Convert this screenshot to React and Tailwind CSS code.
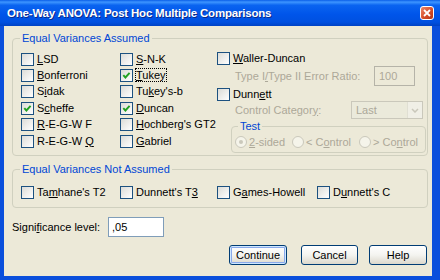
import React from 'react';

const Check = ({ checked }) => (
  <span className="w-[13px] h-[13px] shrink-0 border border-[#1c5180] bg-linear-to-br from-[#dcdcd7] to-white flex items-center justify-center">
    {checked && (
      <svg width="9" height="9" viewBox="0 0 9 9">
        <polyline points="1.3,4.2 3.4,6.5 7.6,1.8" fill="none" stroke="#21a121" strokeWidth="1.9" />
      </svg>
    )}
  </span>
);

const Row = ({ checked, children, h = 'h-[16.4px]' }) => (
  <div className={`${h} flex items-center gap-[3px] whitespace-nowrap`}>
    <Check checked={checked} />
    <span>{children}</span>
  </div>
);

const Radio = ({ checked }) => (
  <span className="w-[12px] h-[12px] shrink-0 rounded-full border border-[#cac8bb] bg-[#f5f4ea] flex items-center justify-center">
    {checked && <span className="w-[4px] h-[4px] rounded-full bg-[#cac8bb]" />}
  </span>
);

const Btn = ({ children, def }) => (
  <button
    className={`h-[20px] rounded-[3px] border border-[#003c74] bg-linear-to-b from-white via-[#f4f4f0] to-[#dcd8cc] text-black ${
      def ? 'shadow-[inset_0_0_0_1px_#cee7ff,inset_0_0_0_2px_#8aa9ea]' : ''
    }`}
  >
    {children}
  </button>
);

export default function App() {
  return (
    <div className="w-[440px] h-[280px] flex flex-col bg-[#0a4fdc] font-['Liberation_Sans',Arial,sans-serif] text-[11px] leading-[13px] text-black overflow-hidden">
      {/* Title bar */}
      <div className="h-[26px] shrink-0 flex items-center pl-[7px] pr-[6px] bg-[linear-gradient(180deg,#0a5fe8_0%,#3d95ff_8%,#0a64f0_20%,#0055ea_55%,#0050e0_85%,#0042c4_100%)]">
        <span className="text-white font-bold text-[11.5px] tracking-[-0.2px] [text-shadow:1px_1px_0_#0b2a8a]">
          One-Way ANOVA: Post Hoc Multiple Comparisons
        </span>
        <div className="ml-auto w-[14px] h-[14px] rounded-[3px] border border-white bg-linear-to-br from-[#e9866a] via-[#d9512c] to-[#b33316] flex items-center justify-center">
          <svg width="8" height="8" viewBox="0 0 8 8">
            <path d="M1 1 L7 7 M7 1 L1 7" stroke="white" strokeWidth="1.8" />
          </svg>
        </div>
      </div>

      {/* Body */}
      <div className="flex-1 ml-[4px] mr-[8px] mb-[4px] bg-[#ece9d8] pl-[8px] pr-[4px] pt-[5px] flex flex-col">
        {/* Equal Variances Assumed */}
        <fieldset className="border border-[#d0d0bf] rounded-[4px] px-0 pb-[2px]">
          <legend className="ml-[7px] px-[2px] leading-[14px] text-[#0046d5]">Equal Variances Assumed</legend>
          <div className="grid grid-cols-[99px_97px_1fr] pl-[8px] pt-[6px] items-start">
            <div className="flex flex-col">
              <Row><u>L</u>SD</Row>
              <Row><u>B</u>onferroni</Row>
              <Row>S<u>i</u>dak</Row>
              <Row checked>S<u>c</u>heffe</Row>
              <Row><u>R</u>-E-G-W F</Row>
              <Row>R-E-G-W <u>Q</u></Row>
            </div>
            <div className="flex flex-col">
              <Row><u>S</u>-N-K</Row>
              <Row checked>
                <span className="outline outline-1 outline-dotted outline-black"><u>T</u>ukey</span>
              </Row>
              <Row>Tu<u>k</u>ey's-b</Row>
              <Row checked><u>D</u>uncan</Row>
              <Row><u>H</u>ochberg's GT2</Row>
              <Row><u>G</u>abriel</Row>
            </div>
            <div className="flex flex-col">
              <Row h="h-[15px]"><u>W</u>aller-Duncan</Row>
              <div className="h-[20px] flex items-center text-[#aca899]">
                <span className="pl-[18px]">Type I<u>/</u>Type II Error Ratio:</span>
                <span className="ml-auto mr-[12px] w-[41px] h-[20px] border border-[#b5b3a8] flex items-center pl-[4px]">100</span>
              </div>
              <div className="mt-[1px]">
                <Row h="h-[14px]">Dunn<u>e</u>tt</Row>
              </div>
              <div className="h-[18px] flex items-center text-[#aca899]">
                <span className="pl-[18px]">Control Categor<u>y</u>:</span>
                <span className="ml-auto mr-[4px] w-[72px] h-[18px] border border-[#cac8bb] bg-[#ebeadb] flex items-center">
                  <span className="pl-[4px] flex-1">Last</span>
                  <span className="w-[15px] h-[16px] bg-[#f0efe6] border-l border-[#e0dfd3] flex items-center justify-center">
                    <svg width="8" height="5" viewBox="0 0 8 5">
                      <path d="M1 1 L4 4 L7 1" fill="none" stroke="#c9c7ba" strokeWidth="1.5" />
                    </svg>
                  </span>
                </span>
              </div>
              <fieldset className="ml-[14px] mr-[1px] border border-[#d0d0bf] rounded-[4px] px-0 pb-[3px]">
                <legend className="ml-[6px] px-[2px] leading-[14px] text-[#0046d5]">Test</legend>
                <div className="h-[14px] mt-[2px] pl-[3px] flex items-center text-[#aca899] whitespace-nowrap">
                  <div className="w-[57px] flex items-center gap-[2px]">
                    <Radio checked />
                    <span><u>2</u>-sided</span>
                  </div>
                  <div className="w-[67px] flex items-center gap-[2px]">
                    <Radio />
                    <span>&lt; C<u>o</u>ntrol</span>
                  </div>
                  <div className="flex items-center gap-[2px]">
                    <Radio />
                    <span>&gt; Co<u>n</u>trol</span>
                  </div>
                </div>
              </fieldset>
            </div>
          </div>
        </fieldset>

        {/* Equal Variances Not Assumed */}
        <fieldset className="mt-[6px] border border-[#d0d0bf] rounded-[4px] px-0 pb-[7px]">
          <legend className="ml-[7px] px-[2px] leading-[14px] text-[#0046d5]">Equal Variances Not Assumed</legend>
          <div className="grid grid-cols-[99px_97px_100px_1fr] pl-[8px] pt-[8px]">
            <Row h="h-[16px]">Ta<u>m</u>hane's T2</Row>
            <Row h="h-[16px]">Dunnett's T<u>3</u></Row>
            <Row h="h-[16px]">G<u>a</u>mes-Howell</Row>
            <Row h="h-[16px]">D<u>u</u>nnett's C</Row>
          </div>
        </fieldset>

        {/* Significance level */}
        <div className="mt-[9px] h-[20px] flex items-center">
          <span className="w-[96px]">Signi<u>f</u>icance level:</span>
          <span className="w-[56px] h-[20px] border border-[#7f9db9] bg-white flex items-center pl-[3px]">,05</span>
        </div>

        {/* Buttons */}
        <div className="mt-[8px] flex pl-[217px]">
          <div className="w-[58px] flex flex-col"><Btn def>Continue</Btn></div>
          <div className="ml-[14px] w-[57px] flex flex-col"><Btn>Cancel</Btn></div>
          <div className="ml-[11px] w-[58px] flex flex-col"><Btn>Help</Btn></div>
        </div>
      </div>
    </div>
  );
}
